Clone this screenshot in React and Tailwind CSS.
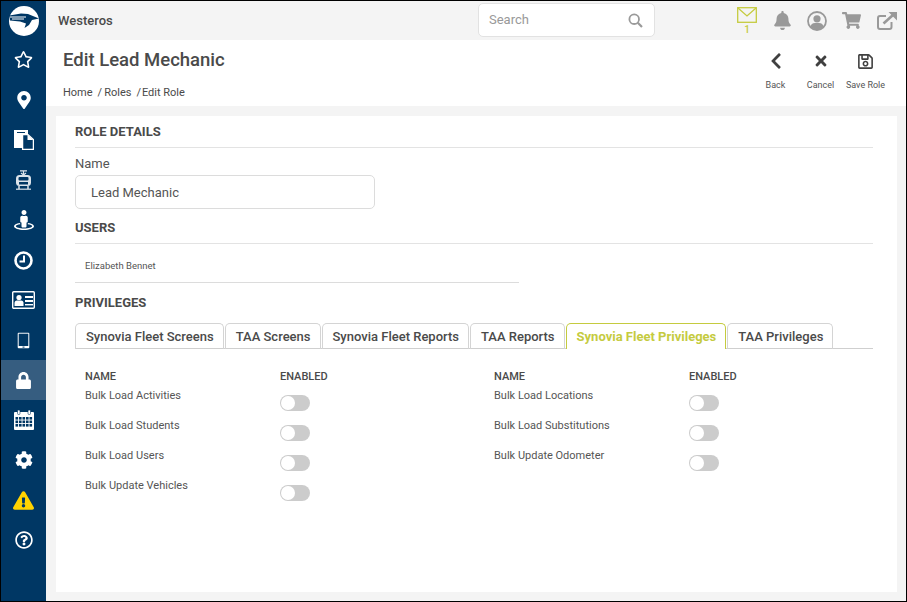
import {
  FaRegStar, FaMapMarkerAlt, FaStreetView, FaLock, FaCog, FaExclamationTriangle, FaRegQuestionCircle,
  FaBell, FaShoppingCart, FaChevronLeft, FaTimes, FaRegSave,
} from "react-icons/fa";

const navy = "#003764";

const Logo = () => (
  <svg width="30" height="30" viewBox="0 0 30 30">
    <circle cx="15" cy="15" r="15" fill="#fff" />
    <path d="M0.5 9.5 L12 7.5 L19 8 L30 12.5 L23 14 L20 19 L15.5 22 L17 17.5 L11 15.5 L1 14.5 Z" fill={navy} />
    <path d="M1 11 H17 M3 13 H15" stroke="#fff" strokeWidth="1" />
  </svg>
);

const Files = () => (
  <svg width="20" height="20" viewBox="0 0 20 20">
    <path d="M0 0 H14 V4 H8 V18 H0 Z" fill="#fff" />
    <path d="M3 2 H11 V3 H3 Z" fill={navy} />
    <path d="M8.6 4.6 H14 L19.4 9.5 V19.4 H8.6 Z" fill={navy} stroke="#fff" strokeWidth="1.3" />
    <path d="M13.5 4.6 L19.4 10 H13.5 Z" fill="#fff" />
  </svg>
);

const Tram = () => (
  <svg width="17" height="20" viewBox="0 0 17 20" fill="none" stroke="#dbe3ea">
    <path d="M5 0.8 H12 M8.5 1 V4 M6 3 L8.5 5 L11 3" strokeWidth="1.2" />
    <rect x="1" y="5" width="15" height="11" rx="3.5" fill="#dbe3ea" stroke="none" />
    <rect x="3.5" y="7" width="10" height="3.5" rx="1" fill={navy} stroke="none" />
    <rect x="4" y="12" width="9" height="2.5" fill={navy} stroke="none" />
    <path d="M1 19.2 H16" strokeWidth="1.2" />
    <path d="M4 16 V19 M13 16 V19" strokeWidth="1.5" />
  </svg>
);

const Clock = () => (
  <svg width="19" height="19" viewBox="0 0 19 19" fill="none" stroke="#fff">
    <circle cx="9.5" cy="9.5" r="8" strokeWidth="2.6" />
    <path d="M10 4.5 V10.5 H5.5" strokeWidth="2" />
  </svg>
);

const IdCard = () => (
  <svg width="23" height="18" viewBox="0 0 23 18">
    <rect x="0.7" y="0.7" width="21.6" height="16.6" rx="1" fill={navy} stroke="#fff" strokeWidth="1.4" />
    <circle cx="7" cy="6.5" r="2.6" fill="#fff" />
    <path d="M2.5 15 V12 Q2.5 9.5 5 9.5 H9 Q11.5 9.5 11.5 12 V15 Z" fill="#fff" />
    <rect x="13" y="5" width="8" height="2" fill="#fff" />
    <rect x="13" y="9" width="8" height="2" fill="#fff" />
    <rect x="13" y="13" width="8" height="1.4" fill="#fff" />
  </svg>
);

const Tablet = () => (
  <svg width="13" height="17" viewBox="0 0 13 17">
    <rect x="0.7" y="0.7" width="11.6" height="15.6" rx="1" fill="#fff" />
    <rect x="1.7" y="1.7" width="9.6" height="12.3" fill={navy} />
    <rect x="5.5" y="14.6" width="2" height="1" fill={navy} />
  </svg>
);

const Calendar = () => (
  <svg width="20" height="20" viewBox="0 0 20 20">
    <rect x="0" y="2" width="20" height="18" rx="1" fill="#fff" />
    <rect x="3.5" y="0" width="2.5" height="4.5" rx="1" fill="#fff" stroke={navy} strokeWidth="0.6" />
    <rect x="14" y="0" width="2.5" height="4.5" rx="1" fill="#fff" stroke={navy} strokeWidth="0.6" />
    {[7, 10.5, 14].map((y) =>
      [1.5, 5, 8.5, 12, 15.5].map((x) => (
        <rect key={`${x}-${y}`} x={x} y={y} width="2.6" height="2.6" fill={navy} />
      ))
    )}
  </svg>
);

const navItems = [
  { icon: <FaRegStar size={19} className="-mt-px" /> },
  { icon: <FaMapMarkerAlt size={18} /> },
  { icon: <Files /> },
  { icon: <Tram /> },
  { icon: <FaStreetView size={20} /> },
  { icon: <Clock /> },
  { icon: <IdCard /> },
  { icon: <Tablet /> },
  { icon: <FaLock size={17} />, active: true },
  { icon: <Calendar /> },
  { icon: <FaCog size={18} /> },
  { icon: <FaExclamationTriangle size={21} className="text-[#ffd200]" /> },
  { icon: <FaRegQuestionCircle size={18} /> },
];

const tabs = ["Synovia Fleet Screens", "TAA Screens", "Synovia Fleet Reports", "TAA Reports", "Synovia Fleet Privileges", "TAA Privileges"];

const leftRows = ["Bulk Load Activities", "Bulk Load Students", "Bulk Load Users", "Bulk Update Vehicles"];
const rightRows = ["Bulk Load Locations", "Bulk Load Substitutions", "Bulk Update Odometer"];

const Toggle = () => (
  <div className="w-[30px] h-4 rounded-full bg-[#cccccc] p-px">
    <div className="w-3.5 h-3.5 rounded-full bg-white" />
  </div>
);

const PrivilegeColumn = ({ rows, className }) => (
  <div className={className}>
    <div className="flex h-[14px] items-center text-[11px] font-medium text-[#4a4a4a]">
      <div className="w-[195px]">NAME</div>
      <div>ENABLED</div>
    </div>
    {rows.map((row) => (
      <div key={row} className="flex h-[30px] pt-[5px] text-[11px] text-[#555]">
        <div className="w-[195px] leading-[14px]">{row}</div>
        <div className="pt-[6px]"><Toggle /></div>
      </div>
    ))}
  </div>
);

const Action = ({ icon, label }) => (
  <div className="flex flex-col items-center w-[45px]">
    <div className="h-[24px] flex items-center text-[#404040]">{icon}</div>
    <div className="mt-[6px] text-[9px] leading-[12px] text-[#555] whitespace-nowrap">{label}</div>
  </div>
);

const SectionTitle = ({ children }) => (
  <div className="text-[13px] font-bold text-[#4a4a4a] leading-[14px]">{children}</div>
);

const App = () => {
  return (
    <div className="w-[907px] h-[602px] border border-black flex overflow-hidden bg-[#f4f4f4] font-['Roboto',sans-serif]">
      <aside className="w-[45px] shrink-0 bg-[#003764] text-white flex flex-col">
        <div className="h-[39px] flex items-center justify-center pl-px"><Logo /></div>
        {navItems.map((item, i) => (
          <div key={i} className={`h-10 flex items-center justify-center ${item.active ? "bg-[#365d80]" : ""}`}>
            {item.icon}
          </div>
        ))}
      </aside>

      <div className="flex-1 flex flex-col min-w-0">
        <header className="h-[39px] shrink-0 flex items-center pl-[12px]">
          <div className="w-[55px] shrink-0 text-[13px] font-medium text-[#4a4a4a]">Westeros</div>
          <div className="ml-[365px] mt-[-1px] w-[177px] h-[34px] shrink-0 bg-white border border-[#e2e2e2] rounded-[5px] flex items-center justify-between pl-[10px] pr-[11px] text-[13px] text-[#999]">
            <span>Search</span>
            <svg width="15" height="15" viewBox="0 0 15 15" fill="none" stroke="#9a9a9a" strokeWidth="1.8">
              <circle cx="6.2" cy="6.2" r="4.8" />
              <path d="M9.8 9.8 L14 14" strokeWidth="2.2" />
            </svg>
          </div>
          <div className="ml-[82px] flex items-center text-[#999]">
            <div className="w-[20px] shrink-0 flex flex-col items-center">
              <svg width="20" height="16" viewBox="0 0 20 16" fill="none" stroke="#c5cb3f" strokeWidth="1.3">
                <rect x="0.7" y="0.7" width="18.6" height="14.6" />
                <path d="M0.7 0.7 L10 9 L19.3 0.7" />
              </svg>
              <span className="mt-px text-[10px] leading-[11px] text-[#c5cb3f] font-medium">1</span>
            </div>
            <FaBell size={19} className="ml-[16px] shrink-0" />
            <svg width="20" height="20" viewBox="0 0 20 20" className="ml-[15px] shrink-0">
              <circle cx="10" cy="10" r="9" fill="none" stroke="#999" strokeWidth="1.8" />
              <circle cx="10" cy="7.8" r="3.6" fill="#999" />
              <path d="M3.5 16 Q4 12 8 12 H12 Q16 12 16.5 16 Q10 21 3.5 16 Z" fill="#999" />
            </svg>
            <FaShoppingCart size={19} className="ml-[15px] shrink-0" />
            <svg width="20" height="18" viewBox="0 0 20 18" className="ml-[16px] shrink-0">
              <path d="M14.5 10 V15 A2 2 0 0 1 12.5 17 H3 A2 2 0 0 1 1 15 V6 A2 2 0 0 1 3 4 H9" fill="none" stroke="#999" strokeWidth="2" />
              <path d="M6.5 11.5 L16 3" fill="none" stroke="#999" strokeWidth="2.6" />
              <path d="M11.5 0 H20 V8.5 Z" fill="#999" />
            </svg>
          </div>
        </header>

        <section className="h-[66px] shrink-0 bg-white flex justify-between pl-[17px] pr-[18px]">
          <div>
            <h1 className="mt-[8px] text-[18.5px] leading-[24px] font-medium text-[#4a4a4a]">Edit Lead Mechanic</h1>
            <div className="mt-[14px] flex text-[11px] leading-[14px] text-[#4a4a4a]">
              <span>Home</span>
              <span className="ml-[5px]">/</span>
              <span className="ml-[2px]">Roles</span>
              <span className="ml-[5px]">/</span>
              <span className="ml-[1px]">Edit Role</span>
            </div>
          </div>
          <div className="flex pt-[9px]">
            <Action icon={<FaChevronLeft size={18} />} label="Back" />
            <Action icon={<FaTimes size={16} />} label="Cancel" />
            <Action icon={<FaRegSave size={17} />} label="Save Role" />
          </div>
        </section>

        <main className="flex-1 mt-[10px] mb-[9px] ml-[10px] mr-[9px] bg-white pl-[19px] pr-[24px] pt-[9px]">
          <SectionTitle>ROLE DETAILS</SectionTitle>
          <div className="mt-[8px] border-t border-[#e3e3e3]" />
          <div className="mt-[8px] text-[13px] leading-[16px] text-[#555]">Name</div>
          <div className="mt-[3px] w-[300px] h-[34px] pt-px border border-[#dcdcdc] rounded-[5px] flex items-center pl-[15px] text-[13px] text-[#555]">Lead Mechanic</div>
          <div className="mt-[12px]"><SectionTitle>USERS</SectionTitle></div>
          <div className="mt-[8px] border-t border-[#e3e3e3]" />
          <div className="h-[39px] w-[444px] border-b border-[#dcdcdc] pl-[10px] pt-[15px] text-[9.5px] leading-[14px] text-[#555]">Elizabeth Bennet</div>
          <div className="mt-[13px]"><SectionTitle>PRIVILEGES</SectionTitle></div>
          <div className="mt-[13px] flex border-b border-[#cfcfcf] h-[26px]">
            {tabs.map((tab) => {
              const active = tab === "Synovia Fleet Privileges";
              return (
                <div
                  key={tab}
                  className={`h-[26px] mr-px pl-[10px] pr-[9px] flex items-center rounded-t-[5px] border border-b-0 text-[13px] leading-none ${active ? "border-[#c5cb3f] text-[#c5cb3f] bg-white font-bold" : "border-[#d4d4d4] text-[#4a4a4a] font-medium"}`}
                >
                  {tab}
                </div>
              );
            })}
          </div>
          <div className="flex mt-[21px] pl-[10px]">
            <PrivilegeColumn rows={leftRows} className="w-[409px]" />
            <PrivilegeColumn rows={rightRows} className="w-[300px]" />
          </div>
        </main>
      </div>
    </div>
  );
};

export default App;
